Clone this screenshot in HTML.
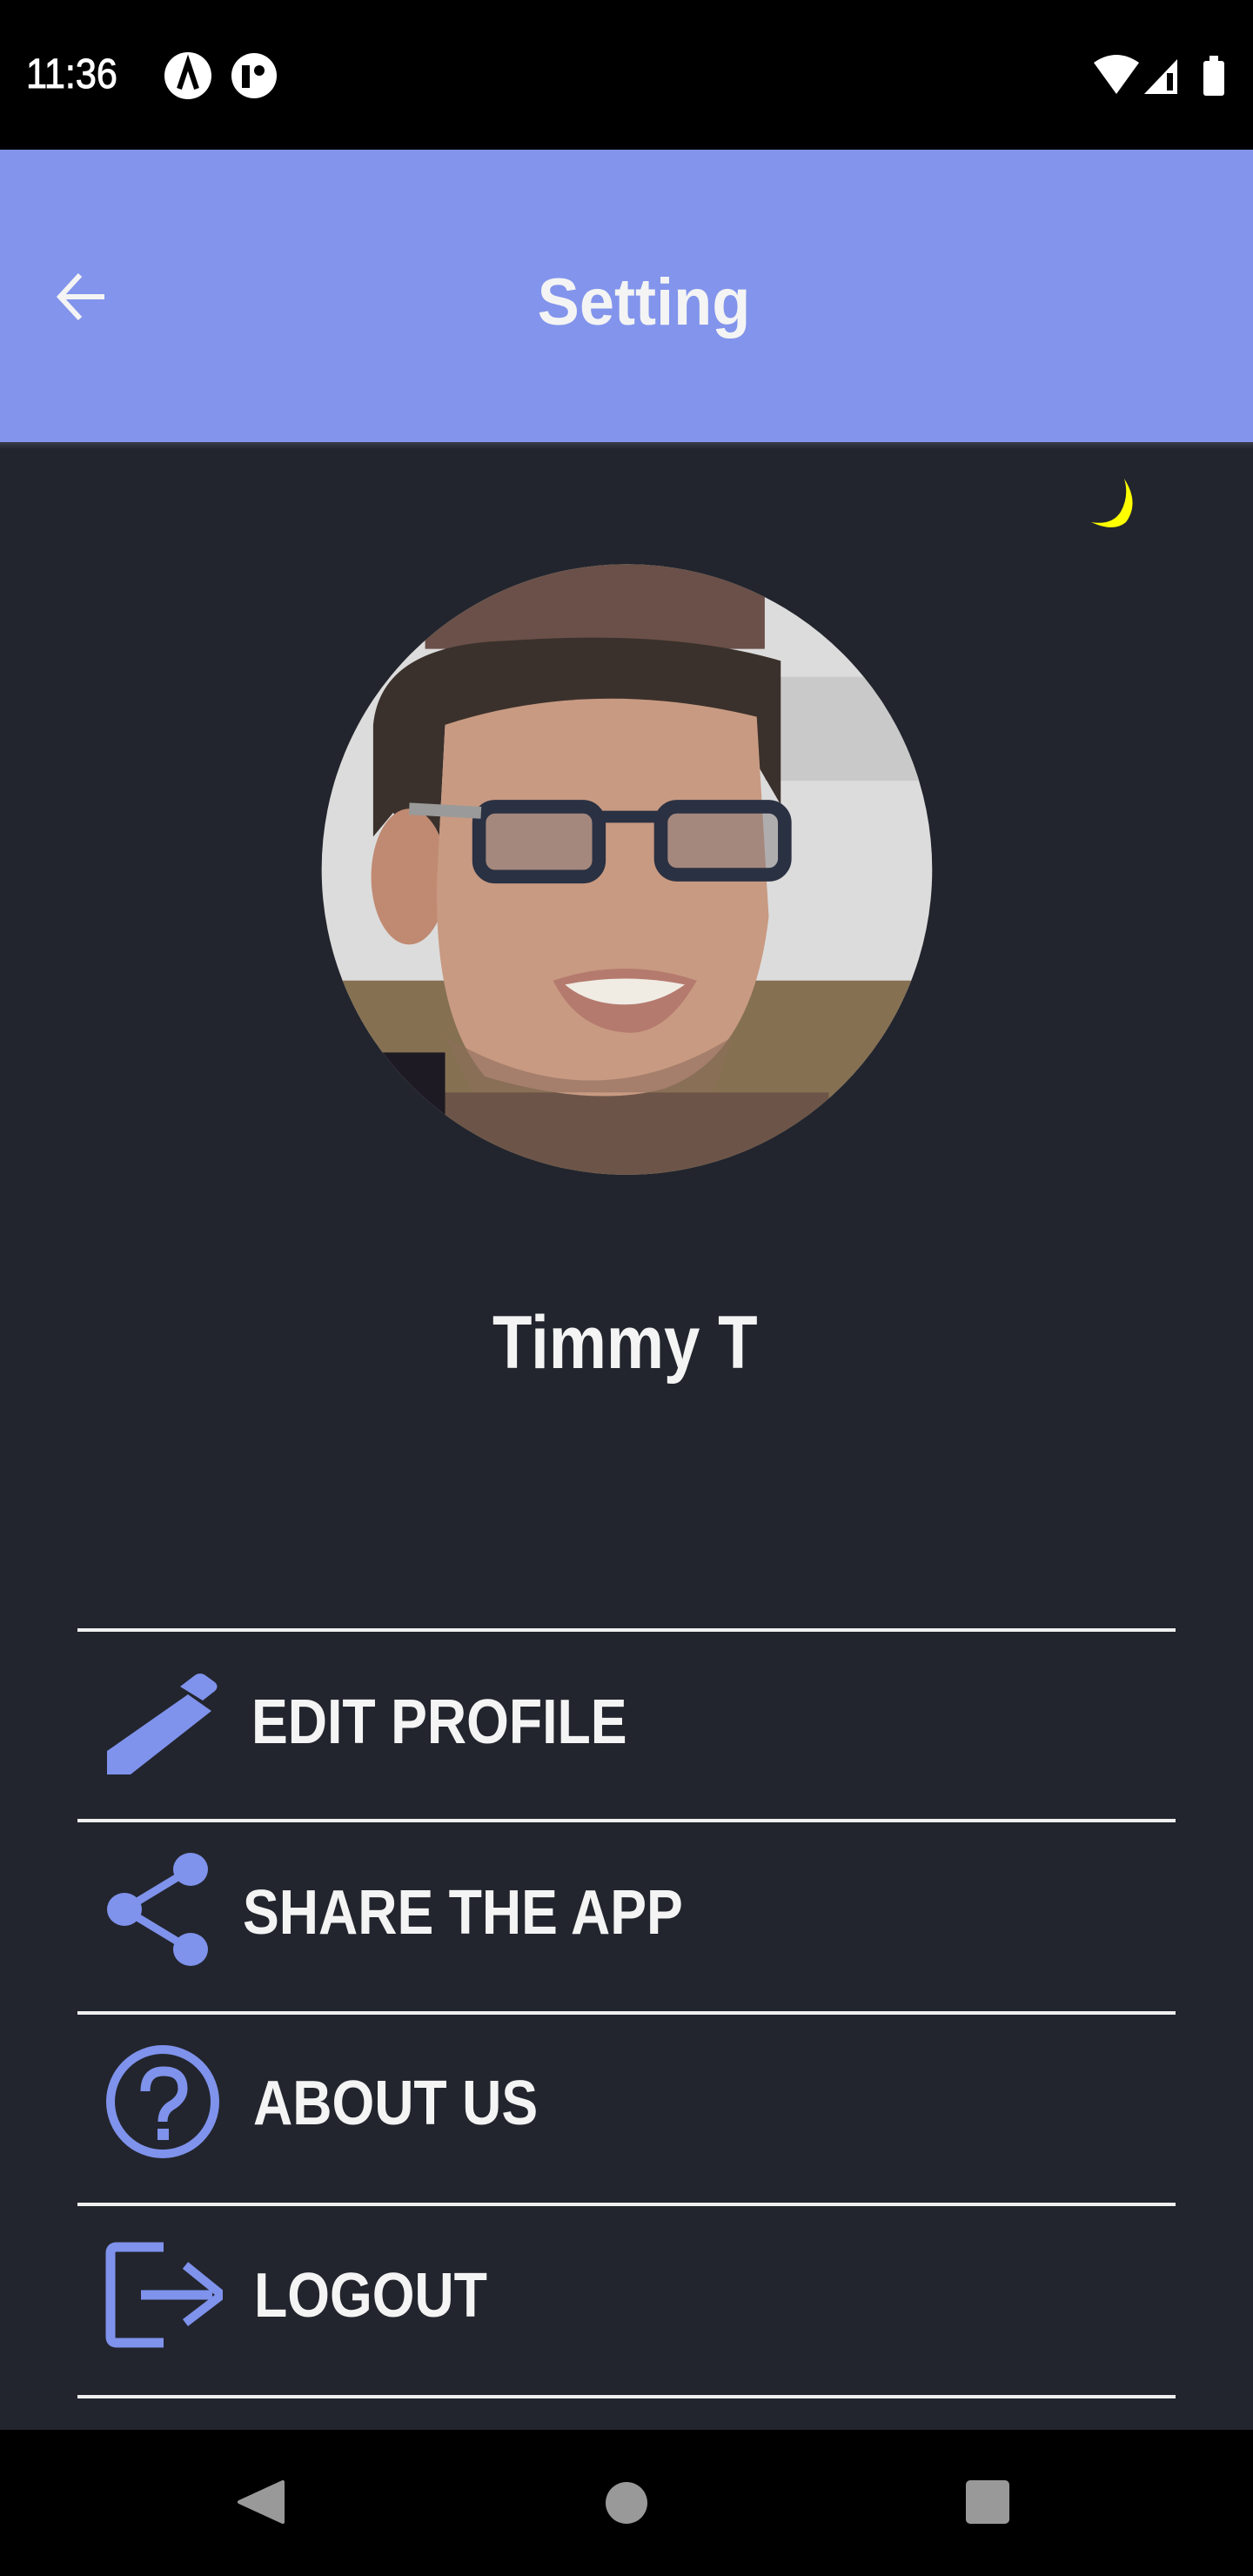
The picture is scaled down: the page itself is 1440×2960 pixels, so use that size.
<!DOCTYPE html>
<html><head><meta charset="utf-8"><style>
html,body{margin:0;padding:0}
body{width:1440px;height:2960px;background:#22252d;position:relative;overflow:hidden;font-family:"Liberation Sans",Arial,sans-serif}
.a{position:absolute}
.line{position:absolute;left:89px;width:1262px;height:4px;background:#f0f0f0}
.item{position:absolute;color:#f4f4f4;font-weight:bold;font-size:72px;line-height:1;transform-origin:left center;transform:scaleX(0.87);white-space:nowrap}
</style></head><body>
<div class="a" style="left:0;top:0;width:1440px;height:172px;background:#000"></div>
<div class="a" style="left:30px;top:62px;color:#fff;font-size:48px;line-height:1;transform:scaleX(0.9);transform-origin:left;-webkit-text-stroke:1px #fff">11:36</div>
<svg class="a" style="left:188px;top:58px" width="140" height="58" viewBox="0 0 140 58">
<circle cx="28" cy="29" r="27" fill="#fff"/><path d="M18 44 L28 14 L38 44" stroke="#000" stroke-width="6" fill="none"/>
<circle cx="104" cy="29" r="26" fill="#fff"/><rect x="90" y="17" width="9" height="26" fill="#000"/><circle cx="110" cy="23" r="6" fill="#000"/>
</svg>
<svg class="a" style="left:1255px;top:62px" width="160" height="60" viewBox="0 0 160 60">
<path d="M2 10 Q28 -8 54 10 L28 46 Z" fill="#fff"/>
<path d="M60 46 L98 6 L98 46 Z" fill="#fff"/><rect x="86" y="22" width="7" height="20" fill="#000"/>
<rect x="128" y="8" width="24" height="40" rx="3" fill="#fff"/><rect x="135" y="2" width="10" height="8" fill="#fff"/>
</svg>
<div class="a" style="left:0;top:172px;width:1440px;height:336px;background:#8294eb"></div>
<div class="a" style="left:0;top:508px;width:1440px;height:8px;background:linear-gradient(#3a3d48,#22252d)"></div>
<svg class="a" style="left:60px;top:310px" width="66" height="62" viewBox="0 0 66 62"><path d="M60 31 H10 M32 6 L9 31 L32 56" stroke="#f4f4f4" stroke-width="6" fill="none"/></svg>
<div class="a" style="left:0;width:1480px;top:310px;text-align:center;color:#f4f4f4;font-weight:bold;font-size:76px;line-height:1;transform:scaleX(0.95);transform-origin:740px"><span>Setting</span></div>
<svg class="a" style="left:1250px;top:548px" width="64" height="62" viewBox="0 0 64 62"><path d="M42 2 Q60 30 44 52 Q30 64 4 52 Q28 56 38 40 Q48 22 42 2Z" fill="#ffff00"/></svg>
<svg class="a" style="left:360px;top:640px" width="720" height="720" viewBox="0 0 1568 1568">
<defs><clipPath id="c"><circle cx="785" cy="782" r="764"/></clipPath></defs>
<g clip-path="url(#c)">
<rect width="1568" height="1568" fill="#dcdcdc"/>
<rect x="1130" y="300" width="438" height="260" fill="#c9c9c9"/>
<rect y="1060" width="1568" height="508" fill="#857052"/>
<rect x="280" width="850" height="230" fill="#6a5048"/>
<rect x="330" y="1340" width="960" height="230" fill="#6c5548"/>
<path d="M150 1240 L330 1240 L330 1568 L150 1568Z" fill="#1e1a24"/>
<path d="M150 420 Q170 220 480 210 Q900 180 1170 260 L1170 620 L1100 500 L330 420 L310 800 L200 640 L150 700Z" fill="#3b312c"/>
<ellipse cx="240" cy="800" rx="95" ry="170" fill="#c08a72"/>
<path d="M330 420 Q700 300 1110 400 L1140 900 Q1100 1250 880 1330 Q700 1380 430 1300 Q300 1150 310 800Z" fill="#c89a82"/>
<path d="M330 1200 Q700 1420 1050 1200 L1000 1340 L400 1340Z" fill="#8e6e5c" opacity=".6"/>
<g stroke="#2a3142" stroke-width="34" fill="#7a7478" fill-opacity=".45">
<rect x="415" y="625" width="300" height="175" rx="40"/>
<rect x="870" y="625" width="310" height="170" rx="40"/>
</g>
<path d="M715 650 L870 650" stroke="#2a3142" stroke-width="30"/>
<path d="M240 630 L420 640" stroke="#9a9a9a" stroke-width="30"/>
<path d="M600 1060 Q780 1000 960 1060 Q880 1200 780 1190 Q660 1180 600 1060Z" fill="#b57a6e"/>
<path d="M630 1070 Q780 1040 930 1070 Q860 1120 780 1120 Q690 1120 630 1070Z" fill="#f0ece4"/>
</g></svg>
<div class="a" style="left:566px;top:1500px;color:#f4f4f4;font-weight:bold;font-size:86px;line-height:1;transform:scaleX(0.865);transform-origin:left;white-space:nowrap">Timmy T</div>
<div class="line" style="top:1871px"></div>
<div class="line" style="top:2090px"></div>
<div class="line" style="top:2311px"></div>
<div class="line" style="top:2531px"></div>
<div class="line" style="top:2752px"></div>
<svg class="a" style="left:120px;top:1910px" width="132" height="132" viewBox="0 0 132 132"><path d="M3 129 L3 102 L96 37 L123 56 L30 129Z M87 28 L104 15 Q110 11 116 15 L127 23 Q132 28 127 33 L113 44Z" fill="#7f92ec"/></svg>
<div class="item" style="left:289px;top:1943px">EDIT PROFILE</div>
<svg class="a" style="left:120px;top:2128px" width="126" height="136" viewBox="0 0 126 136"><g fill="#7f92ec"><ellipse cx="99" cy="20" rx="20" ry="19"/><ellipse cx="99" cy="112" rx="20" ry="19"/><ellipse cx="23" cy="66" rx="20" ry="19"/></g><path d="M23 66 L99 20 M23 66 L99 112" stroke="#7f92ec" stroke-width="9"/></svg>
<div class="item" style="left:279px;top:2162px">SHARE THE APP</div>
<svg class="a" style="left:120px;top:2348px" width="136" height="136" viewBox="0 0 136 136"><ellipse cx="67" cy="67" rx="60" ry="60" fill="none" stroke="#7f92ec" stroke-width="10"/><path d="M47 55 Q47 32 68 32 Q90 32 90 52 Q90 64 76 72 Q67 78 67 90" fill="none" stroke="#7f92ec" stroke-width="11"/><rect x="61" y="98" width="13" height="13" fill="#7f92ec"/></svg>
<div class="item" style="left:291px;top:2381px">ABOUT US</div>
<svg class="a" style="left:120px;top:2575px" width="136" height="124" viewBox="0 0 136 124"><path d="M68 7 H14 Q7 7 7 14 V110 Q7 117 14 117 H68" fill="none" stroke="#7f92ec" stroke-width="11"/><path d="M42 62 H124" stroke="#7f92ec" stroke-width="11"/><path d="M93 28 L135 62 L93 94" fill="none" stroke="#7f92ec" stroke-width="10"/></svg>
<div class="item" style="left:292px;top:2602px">LOGOUT</div>
<div class="a" style="left:0;top:2792px;width:1440px;height:168px;background:#000"></div>
<svg class="a" style="left:270px;top:2840px" width="900" height="70" viewBox="0 0 900 70"><path d="M5 35 L55 12 L55 58Z" fill="#999" stroke="#999" stroke-width="4" stroke-linejoin="round"/><circle cx="450" cy="36" r="24" fill="#999"/><rect x="840" y="10" width="50" height="50" rx="5" fill="#999"/></svg>
</body></html>
